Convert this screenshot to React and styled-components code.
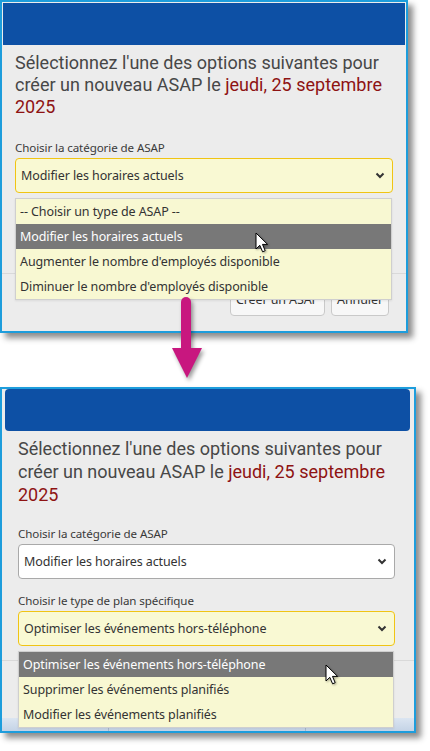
import React from "react";
import styled, { createGlobalStyle } from "styled-components";

const GlobalStyle = createGlobalStyle`
    body {
        margin: 0;
        background: #ffffff;
        font-family: "Noto Sans", "Open Sans", sans-serif;
    }
`;

const Page = styled.div`
    position: relative;
    width: 430px;
    height: 751px;
    overflow: hidden;
`;

const Frame = styled.div`
    box-sizing: border-box;
    width: ${(p) => p.$width}px;
    margin-top: ${(p) => p.$top || 0}px;
    border: 2px solid #1d9ddc;
    padding-top: ${(p) => p.$padTop || 0}px;
    background: #ececec;
    box-shadow: 5px 5px 6px rgba(0, 0, 0, 0.45);
`;

const Header = styled.div`
    height: 42px;
    margin: ${(p) => p.$inset || "0 1px"};
    background: #0d50a5;
    border-radius: ${(p) => (p.$rounded ? "4px" : "0")};
`;

const Body = styled.div`
    padding: ${(p) => p.$pad};
`;

const Title = styled.p`
    margin: 0;
    font-family: Roboto, "Liberation Sans", sans-serif;
    font-size: 18px;
    line-height: ${(p) => p.$lh || 22}px;
    color: #474747;

    span {
        color: #8e1313;
    }
`;

const Label = styled.div`
    margin-top: ${(p) => p.$gap}px;
    font-size: 11.6px;
    letter-spacing: -0.1px;
    line-height: 16px;
    color: #3a3a3a;
`;

const SelectWrap = styled.div`
    position: relative;
    margin-top: 2px;
`;

const Select = styled.div`
    box-sizing: border-box;
    height: 35px;
    display: flex;
    align-items: center;
    justify-content: space-between;
    padding: 0 7px 0 5px;
    border: 1px solid ${(p) => (p.$plain ? "#a9a9a9" : "#f0c414")};
    border-radius: 4px;
    background: ${(p) => (p.$plain ? "#ffffff" : "#f9f9d3")};
    font-size: 12.5px;
    letter-spacing: -0.1px;
    color: #333;
`;

const Chevron = () => (
    <svg width="10" height="7" viewBox="0 0 10 7">
        <path d="M1.5 1.5 L5 5 L8.5 1.5" fill="none" stroke="#333" strokeWidth="2" />
    </svg>
);

const Dropdown = styled.div`
    position: absolute;
    z-index: 5;
    left: 0;
    right: 1px;
    top: calc(100% + 5px);
    border: 1px solid #cfcfcf;
    background: #f8f8d2;
    box-shadow: 0 1px 2px rgba(0, 0, 0, 0.08);
`;

const Option = styled.div`
    position: relative;
    height: 25px;
    line-height: 25px;
    padding-left: 4px;
    font-size: 12.5px;
    letter-spacing: -0.1px;
    white-space: nowrap;
    color: ${(p) => (p.$active ? "#ffffff" : "#333333")};
    background: ${(p) => (p.$active ? "#787878" : "transparent")};
`;

const CursorBox = styled.svg`
    position: absolute;
    left: ${(p) => p.$x}px;
    top: ${(p) => p.$y}px;
    filter: drop-shadow(1px 1px 1px rgba(0, 0, 0, 0.35));
`;

const Cursor = ({ x, y }) => (
    <CursorBox $x={x} $y={y} width="16" height="22" viewBox="0 0 16 22">
        <path
            d="M1 1 L1 17 L4.8 13.3 L7.6 19.8 L10.2 18.7 L7.5 12.4 L12.6 12.4 Z"
            fill="#ffffff"
            stroke="#000000"
            strokeWidth="1"
            strokeLinejoin="round"
        />
    </CursorBox>
);

const Footer = styled.div`
    display: flex;
    justify-content: flex-end;
    gap: 6px;
    border-top: 1px solid #d9d9d9;
    padding: 9px ${(p) => p.$right}px 15px 0;
`;

const Button = styled.div`
    box-sizing: border-box;
    height: 33px;
    padding: 0 5px;
    display: flex;
    align-items: center;
    border: 1px solid #c9c9c9;
    border-radius: 4px;
    background: #f7f7f7;
    font-size: 12.5px;
    letter-spacing: -0.1px;
    color: #333;
`;

const Strip = styled.div`
    display: grid;
    grid-template-columns: 106px 197px 1fr;
    height: 13px;
    background: linear-gradient(#dbe5f1, #c4d3e6);

    div + div {
        border-left: 1px solid #a7b7cc;
    }
`;

const FlowArrow = styled.svg`
    position: absolute;
    z-index: 10;
    left: 168px;
    top: 294px;
    filter: drop-shadow(2px 3px 2px rgba(0, 0, 0, 0.4));
`;

const TitleText = ({ lh }) => (
    <Title $lh={lh}>
        Sélectionnez l'une des options suivantes pour
        <br />
        créer un nouveau ASAP le <span>jeudi, 25 septembre</span>
        <br />
        <span>2025</span>
    </Title>
);

const Buttons = ({ right }) => (
    <Footer $right={right}>
        <Button>Créer un ASAP</Button>
        <Button>Annuler</Button>
    </Footer>
);

const App = () => {
    return (
        <Page>
            <GlobalStyle />

            <Frame $width={408} $padTop={1}>
                <Header />
                <Body $pad="7px 13px 80px 13px">
                    <TitleText lh={22} />
                    <Label $gap={22}>Choisir la catégorie de ASAP</Label>
                    <SelectWrap>
                        <Select>
                            Modifier les horaires actuels
                            <Chevron />
                        </Select>
                        <Dropdown>
                            <Option>-- Choisir un type de ASAP --</Option>
                            <Option $active>
                                Modifier les horaires actuels
                                <Cursor x={239} y={8} />
                            </Option>
                            <Option>Augmenter le nombre d'employés disponible</Option>
                            <Option>Diminuer le nombre d'employés disponible</Option>
                        </Dropdown>
                    </SelectWrap>
                </Body>
                <Buttons right={17} />
            </Frame>

            <FlowArrow width="40" height="90" viewBox="0 0 40 90">
                <rect x="13" y="3" width="10" height="56" rx="5" fill="#c8177f" />
                <polygon points="4,54 34,54 19,84" fill="#c8177f" />
            </FlowArrow>

            <Frame $width={416} $top={54}>
                <Header $rounded $inset="0 4px 0 3px" />
                <Body $pad="6px 19px 14px 16px">
                    <TitleText lh={23} />
                    <Label $gap={20}>Choisir la catégorie de ASAP</Label>
                    <SelectWrap>
                        <Select $plain>
                            Modifier les horaires actuels
                            <Chevron />
                        </Select>
                    </SelectWrap>
                    <Label $gap={14}>Choisir le type de plan spécifique</Label>
                    <SelectWrap>
                        <Select>
                            Optimiser les événements hors-téléphone
                            <Chevron />
                        </Select>
                        <Dropdown>
                            <Option $active>
                                Optimiser les événements hors-téléphone
                                <Cursor x={306} y={12} />
                            </Option>
                            <Option>Supprimer les événements planifiés</Option>
                            <Option>Modifier les événements planifiés</Option>
                        </Dropdown>
                    </SelectWrap>
                </Body>
                <Buttons right={23} />
                <Strip>
                    <div />
                    <div />
                    <div />
                </Strip>
            </Frame>
        </Page>
    );
};

export default App;
